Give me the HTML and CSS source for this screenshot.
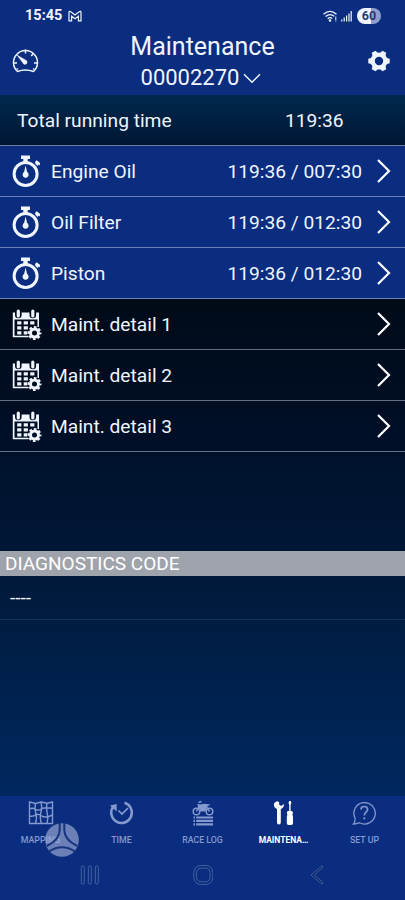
FILE: index.html
```html
<!DOCTYPE html>
<html lang="en">
<head>
<meta charset="utf-8">
<meta name="viewport" content="width=device-width, initial-scale=1">
<title>Maintenance</title>
<link rel="stylesheet" href="styles.css">
</head>
<body>
<svg class="defs" aria-hidden="true">
  <symbol id="watch" viewBox="0 0 30 34">
    <circle cx="13.600" cy="20" r="11.500" fill="none" stroke="currentColor" stroke-width="3"/>
    <path d="M9 1.500h9v3.600h-2.300v4h-4.400v-4H9zM23 8l1.700-1.800 3.200 2.500 .2 2.700-1.300-.8-1.200 1.300-2.100-1.900z" fill="currentColor"/>
    <path d="M13.600 11.500l1.500 6.600a3 3 0 1 1-3 0z" fill="currentColor"/>
  </symbol>
  <symbol id="calendar" viewBox="0 0 30 34">
    <path fill="currentColor" d="M.800 5.500h2.200V8a3.300 3.300 0 0 0 6.600 0V5.500h7.900V8a3.300 3.300 0 0 0 6.600 0V5.500H27V20h-1.500v-7.600H2.500v16.400h14v1.500H.800z"/>
    <rect x="4.700" y="2.500" width="3.200" height="8" rx="1.600" fill="currentColor"/>
    <rect x="19.200" y="2.500" width="3.200" height="8" rx="1.600" fill="currentColor"/>
    <path fill="currentColor" d="M5.200 14.300h4.200v3.200H5.200zM11.700 14.300h4.200v3.200h-4.200zM18.200 14.300h4.200v3.200h-4.200zM5.200 19.300h4.200v3.200H5.200zM11.700 19.300h4.200v3.200h-4.200zM5.200 24.300h4.200v3.200H5.200zM11.700 24.300h3.500v3.200h-3.500z"/>
    <circle cx="22.500" cy="26" r="4" fill="none" stroke="currentColor" stroke-width="3"/>
    <circle cx="22.500" cy="26" r="5.900" fill="none" stroke="currentColor" stroke-width="2.200" stroke-dasharray="2.600 2.034" stroke-dashoffset="1.300"/>
  </symbol>
  <symbol id="next" viewBox="0 0 14 24">
    <path d="M1 1l11 11L1 23" fill="none" stroke="currentColor" stroke-width="2.200"/>
  </symbol>
</svg>
<div class="screen">
  <header class="top">
    <div class="status">
      <span class="clock">15:45</span>
      <svg class="mail" viewBox="0 0 14 12"><path d="M1 10.800V2.500Q1 .600 2.800 1.700L7 5l4.200-3.300Q13 .600 13 2.500v8.300h-2.600V6.200L7 8.700 3.600 6.200v4.600z" fill="none" stroke="currentColor" stroke-width="1.200"/></svg>
      <svg class="wifi" viewBox="0 0 14 12"><g fill="none" stroke="currentColor" stroke-width="1.300"><path d="M.5 4.300Q7-1.600 13.500 4.300"/><path d="M2.600 6.600Q7 2.700 11.300 6.300"/><path d="M4.700 8.800Q7 6.700 9.200 8.500"/></g><circle cx="7" cy="10.500" r="1.200" fill="currentColor"/><path d="M12.800 6.500v5" stroke="currentColor" stroke-dasharray="3.400 .6"/></svg>
      <svg class="signal" viewBox="0 0 11 12"><path d="M.8 9.500v2M3.200 7.500v4M5.600 5.500v6M8 3.500v8M10.200 1v10.500" stroke="currentColor" stroke-width="1.200"/></svg>
      <span class="battery">60</span>
    </div>
    <div class="bar">
      <svg class="gauge" viewBox="0 0 28 26"><g fill="none" stroke="currentColor" stroke-width="1.500"><path d="M6.500 23.500A12 12 0 1 1 22.500 23.500Q14 20.500 6.500 23.500z"/><path d="M14.500 1.500v4M22.500 5l-2.200 3M2.500 15h3.500M23 15h3.500M5.500 21.500l1.500-1M23.500 21.500l-1.500-1"/></g><path d="M5.700 6.800l8.800 5.300a2.200 2.200 0 1 1-2.700 2.700z" stroke="currentColor" stroke-width=".4" fill="currentColor"/></svg>
      <div class="heading">
        <h1>Maintenance</h1>
        <div class="serial"><span>00002270</span><svg viewBox="0 0 18 11"><path d="M1 1.200l8 8 8-8" fill="none" stroke="currentColor" stroke-width="1.500"/></svg></div>
      </div>
      <svg class="gear" viewBox="-11 -11 22 22"><circle r="6.400" fill="none" stroke="currentColor" stroke-width="4.400"/><g fill="currentColor"><path id="tooth" d="M7-3.200l3.700 1v4.400L7 3.200z"/><use href="#tooth" transform="rotate(60)"/><use href="#tooth" transform="rotate(120)"/><use href="#tooth" transform="rotate(180)"/><use href="#tooth" transform="rotate(240)"/><use href="#tooth" transform="rotate(300)"/></g></svg>
    </div>
  </header>
  <main>
    <section class="total"><span>Total running time</span><span class="total-time">119:36</span></section>
    <ul class="list">
      <li class="row blue"><svg class="icon"><use href="#watch"/></svg><span class="name">Engine Oil</span><span class="time">119:36 / 007:30</span><svg class="next"><use href="#next"/></svg></li>
      <li class="row blue"><svg class="icon"><use href="#watch"/></svg><span class="name">Oil Filter</span><span class="time">119:36 / 012:30</span><svg class="next"><use href="#next"/></svg></li>
      <li class="row blue"><svg class="icon"><use href="#watch"/></svg><span class="name">Piston</span><span class="time">119:36 / 012:30</span><svg class="next"><use href="#next"/></svg></li>
      <li class="row"><svg class="icon"><use href="#calendar"/></svg><span class="name">Maint. detail 1</span><svg class="next"><use href="#next"/></svg></li>
      <li class="row"><svg class="icon"><use href="#calendar"/></svg><span class="name">Maint. detail 2</span><svg class="next"><use href="#next"/></svg></li>
      <li class="row"><svg class="icon"><use href="#calendar"/></svg><span class="name">Maint. detail 3</span><svg class="next"><use href="#next"/></svg></li>
    </ul>
    <h2>DIAGNOSTICS CODE</h2>
    <div class="code">----</div>
  </main>
  <footer>
    <nav>
      <a class="tab"><svg viewBox="0 0 26 26"><path d="M1.500 2l6 1.500L13 2l6 1.300 5.500-1.300v21.500H1.500zM7.500 3.500q-1.300 5 .3 10t-.5 10M13 2q1.500 5.500 0 10t.3 11.500M19 3.300q-1.300 5 .2 10t-.2 10.200M1.500 9q3-1.500 6 .3t6-.3 11-.8M1.500 16q4 .8 6-1t6 .8 11-.8" fill="none" stroke="currentColor" stroke-width="1.400"/></svg><span>MAPPING</span></a>
      <a class="tab"><svg viewBox="0 0 26 26"><path d="M4.300 6.500A10.300 10.300 0 1 0 15.500 2.800" fill="none" stroke="currentColor" stroke-width="2.500"/><path d="M1 5.500L7.600 4l.1 7.500z" fill="currentColor"/><path d="M9.500 10.500l3.500 3.500 6-6" fill="none" stroke="currentColor" stroke-width="1.700"/></svg><span>TIME</span></a>
      <a class="tab"><svg viewBox="0 0 26 26"><g fill="none" stroke="currentColor" stroke-width="1.500"><circle cx="6.500" cy="11.500" r="3.300"/><circle cx="19.500" cy="11.500" r="3.300"/><path d="M6.500 11.500l3-6 6 0 4 6M8.500 2.500l3-1"/></g><path d="M7 4l4 .5 3-.8 6.500.8-4 2.500-1 4.500h-5L8.500 7z" fill="currentColor"/><path d="M3.500 17.500H5m1.200 0H23M3.500 20.900H5m1.200 0H23M3.500 24.300H5m1.200 0H23" stroke="currentColor" stroke-width="2.200"/></svg><span>RACE LOG</span></a>
      <a class="tab active"><svg viewBox="0 0 26 26"><path d="M6.500 1.200c-3 .3-4.300 3-3.200 5.400.5 1.300 1.500 2.100 2.700 2.500v13.500q0 2 1.900 2t1.900-2V9c2.200-.9 3.500-2.700 3.200-5L10.300 6 8 4.500l.2-2.300zM18.100 1h1.600l.6 2-.7 2v6h1.500l.9 1.700-.6 2 .6 1.800v6.700q0 1.800-1.700 1.800h-2.800q-1.700 0-1.700-1.800v-6.700l.6-1.800-.6-2 .9-1.700h1.500V5l-.7-2z" fill="currentColor"/></svg><span>MAINTENA…</span></a>
      <a class="tab"><svg viewBox="0 0 26 26"><path d="M3 18a10.700 10.700 0 1 1 4.500 4.700Q5 24 1.500 24 3.500 21.500 3 18z" fill="none" stroke="currentColor" stroke-width="1.300"/><path d="M9 9.500Q9 6.500 12.300 6.500T15.600 9.500C15.600 11.800 12.300 12 12.300 15.500" fill="none" stroke="currentColor" stroke-width="1.700"/><circle cx="12.300" cy="18.300" r="1.100" fill="currentColor"/></svg><span>SET UP</span></a>
    </nav>
    <div class="system">
      <svg viewBox="0 0 20 20"><g fill="none" stroke="currentColor" stroke-width=".7"><rect x="2.300" y="1" width="3" height="18" rx="1.300"/><rect x="9.300" y="1" width="3" height="18" rx="1.300"/><rect x="16.300" y="1" width="3" height="18" rx="1.300"/></g></svg>
      <svg viewBox="0 0 20 20"><g fill="none" stroke="currentColor" stroke-width=".7"><rect x=".8" y=".5" width="19" height="19" rx="7"/><rect x="3.500" y="3.200" width="13.600" height="13.600" rx="4.500"/></g></svg>
      <svg viewBox="0 0 20 20"><path d="M15 .8L4 10l11 9.200 1-1.500L7.200 10 16 2.300z" fill="#08266b" stroke="currentColor" stroke-width=".7"/></svg>
    </div>
    <svg class="badge" viewBox="0 0 34 34"><circle cx="17" cy="17" r="16.800" fill="#a1aed5" fill-opacity=".65"/><path d="M14.700 0v7Q14.500 17 1.800 23M19.300 0v7Q19.500 17 32.200 23M4 28.500q13-8.500 26 0" fill="none" stroke="#17347f" stroke-width="2"/></svg>
  </footer>
</div>
</body>
</html>
```
FILE: styles.css
```css
* { box-sizing: border-box; }
body { margin: 0; font-family: Roboto, "Liberation Sans", sans-serif; color: #f0f5ff; }
svg { display: block; flex: none; }
.defs { width: 0; height: 0; position: absolute; }
.screen { height: 900px; display: flex; flex-direction: column; overflow: hidden; background: #0a2d80; }
.top { height: 95px; background: #0a2d80; }
.status { height: 30px; display: flex; align-items: center; padding: 1px 24px 0 25px; }
.clock { font-size: 14.500px; line-height: 16px; font-weight: 700; width: 43px; padding-top: 1px; }
.mail { width: 14px; height: 12px; }
.wifi { width: 14px; height: 12px; margin-left: auto; }
.signal { width: 11px; height: 12px; margin: 0 5px 0 4px; }
.battery { width: 24px; height: 16px; border-radius: 8px; background: linear-gradient(90deg, #f0f5ff 60%, #8c9dce 60%); color: #253b74; font-size: 12.500px; line-height: 16px; font-weight: 700; text-align: center; }
.bar { height: 65px; display: grid; grid-template-columns: 50px 1fr 50px; }
.gauge { width: 28px; height: 26px; margin: 18px 0 0 11px; }
.gear { width: 22px; height: 22px; margin: 20px 0 0 13px; }
.heading { text-align: center; padding-top: 1px; }
h1 { margin: 0; font-size: 25px; line-height: 31px; font-weight: 400; }
.serial { display: flex; justify-content: center; align-items: center; gap: 4px; padding-right: 3px; font-size: 22px; line-height: 32px; }
.serial svg { width: 18px; height: 11px; margin-top: 1px; }
main { height: 701px; background: linear-gradient(#00294f 0, #001633 51px, #000b18 205px, #000f29 354px, #00132c 370px, #001737 455px, #001b3d 500px, #002860 700px); }
.total { height: 51px; padding: 1px 0 0 17px; display: grid; grid-template-columns: 268px 1fr; align-items: center; font-size: 19.200px; border-bottom: 1px solid #687c9d; }
.list { list-style: none; margin: 0; padding: 0; }
.row { height: 51px; display: flex; align-items: center; padding: 0 14px 0 12px; border-bottom: 1px solid #656d82; font-size: 19.200px; }
.blue { background: #0a2d80; border-color: #6b80b4; }
.icon { width: 30px; height: 34px; margin-right: 9px; }
.name { flex: 1; }
.time { margin-right: 15px; }
.next { width: 14px; height: 24px; color: #fff; }
h2 { margin: 99px 0 0; height: 25px; padding-left: 5px; background: #9fa3ac; color: #fff; font-size: 19px; line-height: 26px; font-weight: 400; }
.code { height: 44px; padding-left: 10px; line-height: 43px; font-size: 19px; border-bottom: 1px solid #143157; }
footer { position: relative; height: 104px; background: #0a2d80; }
nav { height: 56px; display: grid; grid-template-columns: repeat(5, 1fr); }
.tab { display: flex; flex-direction: column; align-items: center; padding-top: 4px; color: #8499ce; }
.tab svg { width: 26px; height: 26px; }
.tab span { font-size: 8.800px; line-height: 12px; margin-top: 8px; font-weight: 500; white-space: nowrap; }
.active { color: #fff; }
.active span { font-size: 8.500px; font-weight: 700; }
.system { display: flex; justify-content: center; gap: 94px; padding-top: 13px; color: #5b75ad; }
.system svg { width: 20px; height: 20px; }
.badge { position: absolute; left: 45px; top: 27px; width: 34px; height: 34px; }
```
